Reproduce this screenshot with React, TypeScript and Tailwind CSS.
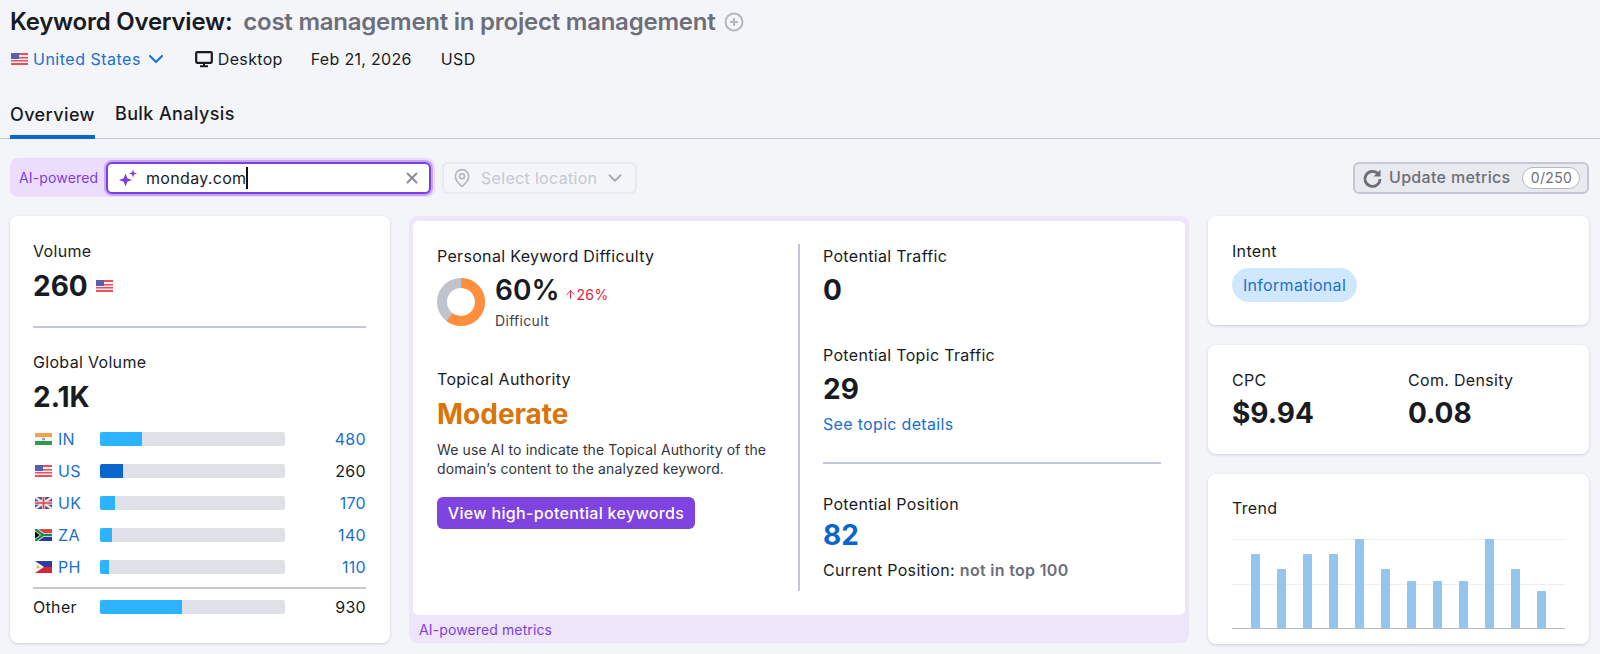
import { ChevronDown, MapPin, X, ArrowUp } from "lucide-react";

const FlagUS = () => (
  <svg width="17" height="12" viewBox="0 0 17 12" className="shrink-0">
    <rect width="17" height="12" fill="#f4eef0" />
    <rect y="0" width="17" height="2" fill="#e8505b" />
    <rect y="4" width="17" height="1.5" fill="#e8505b" />
    <rect y="7" width="17" height="1.5" fill="#e8505b" />
    <rect y="10" width="17" height="2" fill="#e8505b" />
    <rect width="8" height="6" fill="#5560ae" />
  </svg>
);

const FlagIN = () => (
  <svg width="17" height="12" viewBox="0 0 17 12" className="shrink-0">
    <rect width="17" height="4" fill="#f5a04a" />
    <rect y="4" width="17" height="4" fill="#f6f6f6" />
    <rect y="8" width="17" height="4" fill="#2f9a48" />
    <circle cx="8.5" cy="6" r="1.6" fill="#8d9ac8" />
  </svg>
);

const FlagUK = () => (
  <svg width="17" height="12" viewBox="0 0 17 12" className="shrink-0">
    <rect width="17" height="12" fill="#3d4a8f" />
    <path d="M0 0L17 12M17 0L0 12" stroke="#f2dfe2" strokeWidth="2.4" />
    <path d="M8.5 0V12M0 6H17" stroke="#f2dfe2" strokeWidth="3.4" />
    <path d="M8.5 0V12M0 6H17" stroke="#d9434f" strokeWidth="1.6" />
  </svg>
);

const FlagZA = () => (
  <svg width="17" height="12" viewBox="0 0 17 12" className="shrink-0">
    <rect width="17" height="6" fill="#d8483c" />
    <rect y="6" width="17" height="6" fill="#27399a" />
    <path d="M0 0L8 6L0 12M8 6H17" stroke="#f3f3f3" strokeWidth="4" fill="none" />
    <path d="M0 0L8 6L0 12M8 6H17" stroke="#1f8a4c" strokeWidth="2.4" fill="none" />
    <path d="M0 2.5L4.5 6L0 9.5Z" fill="#111" />
  </svg>
);

const FlagPH = () => (
  <svg width="17" height="12" viewBox="0 0 17 12" className="shrink-0">
    <rect width="17" height="6" fill="#2f3da0" />
    <rect y="6" width="17" height="6" fill="#d9263a" />
    <path d="M0 0L9 6L0 12Z" fill="#f7f3f0" />
    <circle cx="3" cy="6" r="1.4" fill="#f2b93b" />
  </svg>
);

const countries = [
  { flag: FlagIN, code: "IN", fill: 42, value: "480", mine: false },
  { flag: FlagUS, code: "US", fill: 23, value: "260", mine: true },
  { flag: FlagUK, code: "UK", fill: 15, value: "170", mine: false },
  { flag: FlagZA, code: "ZA", fill: 12, value: "140", mine: false },
  { flag: FlagPH, code: "PH", fill: 9, value: "110", mine: false },
];

const trend = [74, 59, 74, 74, 89, 59, 47, 47, 47, 89, 59, 37];

const Bar = ({ fill, dark }: { fill: number; dark?: boolean }) => (
  <div className="h-[14px] w-[185px] shrink-0 overflow-hidden rounded-[2px] bg-[#dfe1e9]">
    <div className={dark ? "h-full bg-[#0a66cc]" : "h-full bg-[#2bb3ff]"} style={{ width: fill }} />
  </div>
);

const Sparkles = () => (
  <svg width="18" height="18" viewBox="0 0 18 18" fill="#7c3fe0" className="shrink-0">
    <path d="M6.500 4.500L8.300 9.200L13 11L8.300 12.800L6.500 17.500L4.700 12.800L0 11L4.700 9.200Z" />
    <path d="M14 0.500L15 3.500L18 4.500L15 5.500L14 8.500L13 5.500L10 4.500L13 3.500Z" />
  </svg>
);

const Screen = () => (
  <svg width="18" height="18" viewBox="0 0 18 18" fill="none" stroke="#191b23" className="shrink-0">
    <rect x="1.200" y="2.200" width="15.600" height="10.600" rx="1" strokeWidth="2.200" />
    <path d="M9 13V16M5 16.200H13" strokeWidth="2" />
  </svg>
);

const Refresh = () => (
  <svg width="22" height="22" viewBox="0 0 22 22" fill="none" className="shrink-0">
    <path d="M18 12a7.500 7.500 0 1 1-2.400-5.600" stroke="#6c6e79" strokeWidth="2.800" />
    <path d="M18.500 2.500V9.500H11.500Z" fill="#6c6e79" />
  </svg>
);

const Card = ({ className, children }: { className: string; children: React.ReactNode }) => (
  <div className={`rounded-[8px] bg-white shadow-[0_1px_3px_rgba(30,35,60,0.18)] ${className}`}>{children}</div>
);

const bigNumber = "h-[36px] text-[28px] font-bold leading-[36px] tracking-normal";

export default function App() {
  return (
    <div className="h-[654px] w-[1600px] overflow-hidden bg-[#f4f5f9] font-['Inter',sans-serif] text-[16px] leading-6 tracking-[0.02em] text-[#191b23]">
      <div className="flex h-[43px] items-center pl-[10px] text-[24px] font-semibold tracking-[-0.24px]">
        <span>Keyword Overview:</span>
        <span className="ml-[11px] text-[#6c6e79]">cost management in project management</span>
        <svg width="20" height="20" viewBox="0 0 20 20" fill="none" stroke="#b4b7c2" strokeWidth="2" className="ml-[9px]">
          <circle cx="10" cy="10" r="8.500" />
          <path d="M10 6V14M6 10H14" />
        </svg>
      </div>

      <div className="flex h-[32px] items-center pl-[11px]">
        <FlagUS />
        <span className="ml-[5px] tracking-[0.5px] text-[#1a6fd0]">United States</span>
        <ChevronDown className="ml-[3px] size-[24px] text-[#1a6fd0]" strokeWidth={2} />
        <span className="ml-[27px]">
          <Screen />
        </span>
        <span className="ml-[5px]">Desktop</span>
        <span className="ml-[28px]">Feb 21, 2026</span>
        <span className="ml-[29px]">USD</span>
      </div>

      <div className="mt-[14px] flex h-[50px] gap-[20px] border-b border-[#c4c8d4] pl-[10px] text-[18px] font-medium tracking-[0.4px]">
        <div className="-mb-px flex items-center border-b-4 border-[#0a66cc] pt-[5px]">Overview</div>
        <div className="flex items-center pt-[1px]">Bulk Analysis</div>
      </div>

      <div className="mt-[19px] flex h-[39px] items-center pl-[10px] pr-[11px]">
        <div className="flex h-[39px] w-[425px] items-center rounded-[8px] bg-[#ecdcfd] pl-[9px] pr-[4px]">
          <span className="w-[87px] text-[14px] tracking-[0.15px] text-[#7c3fe0]">AI-powered</span>
          <div className="flex h-[32px] flex-1 items-center rounded-[6px] border-2 border-[#7c3fe0] bg-white pl-[11px] pr-[8px] shadow-[0_0_0_2px_#c9a6f5]">
            <Sparkles />
            <span className="ml-[9px]">monday.com</span>
            <span className="h-[22px] w-[2px] bg-[#111]" />
            <X className="ml-auto size-[18px] text-[#8a8d98]" strokeWidth={2.500} />
          </div>
        </div>
        <div className="ml-[7px] flex h-[32px] w-[195px] items-center rounded-[6px] border-2 border-[#e8e9ef] pl-[8px] text-[#c6c8d2]">
          <MapPin className="size-[20px] text-[#b4b7c2]" strokeWidth={2} />
          <span className="ml-[9px]">Select location</span>
          <ChevronDown className="ml-[7px] size-[22px] text-[#a5a8b4]" strokeWidth={2} />
        </div>
        <div className="ml-auto flex h-[32px] w-[236px] items-center rounded-[6px] border-2 border-[#c4c8d4] bg-[#e9eaf0] pl-[7px] font-medium text-[#6c6e79]">
          <Refresh />
          <span className="ml-[5px] pb-[1px]">Update metrics</span>
          <span className="ml-[12px] flex h-[22px] w-[58px] items-center justify-center rounded-full border border-[#b4b7c2] bg-white text-[14px] font-normal">0/250</span>
        </div>
      </div>

      <div className="mt-[19px] grid grid-cols-[380px_780px_381px] gap-x-[19px] pl-[10px]">
        <Card className="flex h-[427px] flex-col pl-[23px] pr-[24px] pt-[23px]">
          <div>Volume</div>
          <div className="mt-[5px] flex h-[36px] items-center gap-[8px] text-[28px] font-bold tracking-normal">
            260
            <FlagUS />
          </div>
          <div className="mt-[22px] h-[2px] bg-[#c4c8d4]" />
          <div className="mt-[22px]">Global Volume</div>
          <div className={`mt-[5px] ${bigNumber}`}>2.1K</div>
          <div className="mt-[12px] flex flex-col gap-[8px]">
            {countries.map((c) => (
              <div key={c.code} className="flex h-[24px] items-center">
                <div className="flex w-[67px] items-center pl-[2px]">
                  <c.flag />
                  <span className="ml-[6px] text-[#1a6fd0]">{c.code}</span>
                </div>
                <Bar fill={c.fill} dark={c.mine} />
                <span className={c.mine ? "ml-auto" : "ml-auto text-[#1a6fd0]"}>{c.value}</span>
              </div>
            ))}
          </div>
          <div className="mt-[8px] h-[2px] bg-[#c4c8d4]" />
          <div className="mt-[6px] flex h-[24px] items-center">
            <span className="w-[67px]">Other</span>
            <Bar fill={82} />
            <span className="ml-auto">930</span>
          </div>
        </Card>

        <div className="flex h-[427px] flex-col rounded-[8px] bg-[#efe5fb] px-[4px] pt-[5px]">
          <div className="flex h-[394px] rounded-[6px] bg-white pl-[24px] pr-[24px] pt-[23px]">
            <div className="h-[347px] w-[363px] border-r-2 border-[#c4c8d4]">
              <div>Personal Keyword Difficulty</div>
              <div className="mt-[10px] flex">
                <svg width="48" height="48" viewBox="0 0 48 48" className="shrink-0 -rotate-90">
                  <circle cx="24" cy="24" r="19" fill="none" stroke="#c0c3ce" strokeWidth="10" />
                  <circle cx="24" cy="24" r="19" fill="none" stroke="#ff8f3c" strokeWidth="10" strokeDasharray="71.600 119.400" />
                </svg>
                <div className="ml-[10px]">
                  <div className="flex h-[24px] items-center">
                    <span className="text-[28px] font-semibold tracking-normal">60%</span>
                    <span className="ml-[4px] mt-[9px] flex items-center text-[14px] text-[#e0233a]">
                      <ArrowUp className="size-[13px]" strokeWidth={1.800} />
                      26%
                    </span>
                  </div>
                  <div className="mt-[9px] text-[14px] leading-5 text-[#3f414c]">Difficult</div>
                </div>
              </div>
              <div className="mt-[36px]">Topical Authority</div>
              <div className={`mt-[5px] ${bigNumber} text-[#d9750a]`}>Moderate</div>
              <div className="mt-[8px] w-[340px] text-[14px] leading-[19px] tracking-[0.12px] text-[#33353f]">
                We use AI to indicate the Topical Authority of the domain’s content to the analyzed keyword.
              </div>
              <div className="mt-[19px] flex h-[32px] w-[258px] items-center justify-center rounded-[6px] bg-[#7f43df] font-medium text-white">
                View high-potential keywords
              </div>
            </div>
            <div className="flex-1 pl-[23px]">
              <div>Potential Traffic</div>
              <div className={`mt-[4px] ${bigNumber}`}>0</div>
              <div className="mt-[35px]">Potential Topic Traffic</div>
              <div className={`mt-[4px] ${bigNumber}`}>29</div>
              <div className="mt-[5px] text-[#1a6fd0]">See topic details</div>
              <div className="mt-[26px] h-[2px] bg-[#c4c8d4]" />
              <div className="mt-[28px]">Potential Position</div>
              <div className={`mt-[1px] ${bigNumber} text-[#0a66cc]`}>82</div>
              <div className="mt-[5px]">
                Current Position: <span className="font-semibold text-[#6c6e79]">not in top 100</span>
              </div>
            </div>
          </div>
          <div className="pl-[6px] pt-[5px] text-[14px] leading-5 tracking-[0.12px] text-[#7c3fe0]">AI-powered metrics</div>
        </div>

        <div className="flex h-[428px] flex-col gap-[20px]">
          <Card className="h-[109px] px-[24px] pt-[23px]">
            <div>Intent</div>
            <div className="mt-[5px] flex h-[34px] w-[125px] items-center justify-center rounded-full bg-[#cfe8fd] text-[#1a6fd0]">Informational</div>
          </Card>
          <Card className="grid h-[109px] grid-cols-[176px_1fr] px-[24px] pt-[23px]">
            <div>
              <div>CPC</div>
              <div className={`mt-[3px] ${bigNumber}`}>$9.94</div>
            </div>
            <div>
              <div>Com. Density</div>
              <div className={`mt-[3px] ${bigNumber}`}>0.08</div>
            </div>
          </Card>
          <Card className="h-[170px] px-[24px] pt-[22px]">
            <div>Trend</div>
            <svg width="333" height="90" viewBox="0 0 333 90" className="mt-[19px]">
              <path d="M0 0.500H333M0 45.500H333" stroke="#eceef3" />
              {trend.map((h, i) => (
                <rect key={i} x={19 + i * 26} y={89 - h} width="9" height={h} rx="1" fill="#93c5ee" />
              ))}
              <path d="M0 89.500H333" stroke="#b4b8c6" />
            </svg>
          </Card>
        </div>
      </div>
    </div>
  );
}
